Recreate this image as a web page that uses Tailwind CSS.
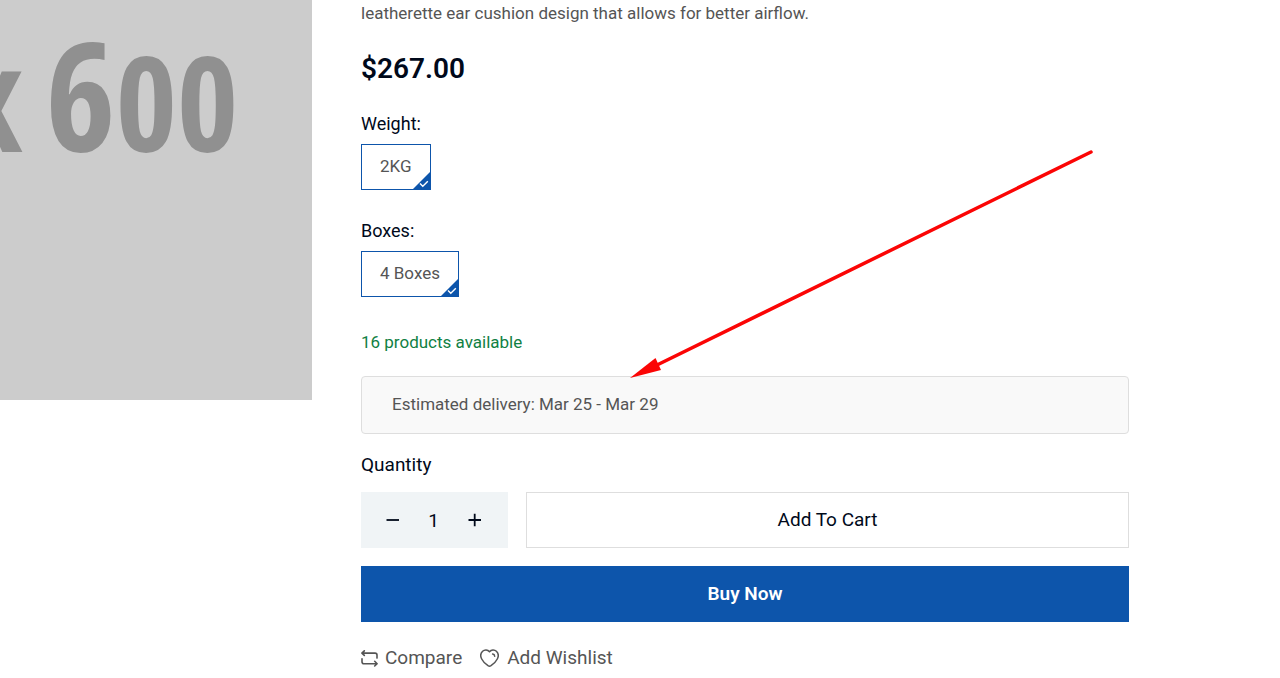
<!DOCTYPE html>
<html lang="en">
<head>
<meta charset="utf-8">
<meta name="viewport" content="width=device-width, initial-scale=1">
<title>Product details</title>
<script src="https://cdn.jsdelivr.net/npm/@tailwindcss/browser@4"></script>
</head>
<body class="relative overflow-x-hidden bg-white font-[Roboto,sans-serif] text-[#555555]">
<main class="flex items-start">
  <div class="flex h-[400px] w-[312px] shrink-0 justify-end overflow-hidden bg-[#cccccc] pt-3 pr-[74px]" role="img" aria-label="Product placeholder">
    <div class="flex items-baseline font-['Open_Sans_Condensed','Open_Sans',sans-serif] leading-[164px] font-bold whitespace-nowrap text-[#909090]"><span class="mr-[22px] text-[148px]">x</span><span class="text-[152px]">6</span><span class="text-[132px]">00</span></div>
  </div>

  <section class="min-w-0 flex-1 pr-[151px] pl-[49px]">
    <p class="text-[17px] leading-[26px]">leatherette ear cushion design that allows for better airflow.</p>
    <p class="mt-[25px] text-[28px] leading-9 font-semibold text-[#00091a]">$267.00</p>

    <fieldset class="mt-[23px]">
      <legend class="text-[18px] leading-7 text-[#00091a]">Weight:</legend>
      <button type="button" aria-pressed="true" class="relative mt-[6px] flex h-[46px] items-center border border-[#0d55ab] px-[18px] text-[17px]">2KG
        <svg class="absolute -right-px -bottom-px size-[19px]" viewBox="0 0 19 19" aria-hidden="true"><path d="M19 0V19H0Z" fill="#0d55ab"/><path d="M8 12.5l2.8 2.8 5-5" fill="none" stroke="#fff" stroke-width="1.4"/></svg>
      </button>
    </fieldset>

    <fieldset class="mt-[27px]">
      <legend class="text-[18px] leading-7 text-[#00091a]">Boxes:</legend>
      <button type="button" aria-pressed="true" class="relative mt-[6px] flex h-[46px] items-center border border-[#0d55ab] px-[18px] text-[17px]">4 Boxes
        <svg class="absolute -right-px -bottom-px size-[19px]" viewBox="0 0 19 19" aria-hidden="true"><path d="M19 0V19H0Z" fill="#0d55ab"/><path d="M8 12.5l2.8 2.8 5-5" fill="none" stroke="#fff" stroke-width="1.4"/></svg>
      </button>
    </fieldset>

    <p class="mt-8 text-[17px] leading-[26px] text-[#108043]">16 products available</p>
    <p class="mt-[21px] flex h-[58px] items-center rounded border border-[#dedede] bg-[#f9f9f9] px-[30px] text-[17px]">Estimated delivery: Mar 25 - Mar 29</p>

    <label for="quantity" class="mt-4 block w-fit text-[19px] leading-[30px] text-[#00091a]">Quantity</label>
    <div class="mt-3 flex gap-[18px]">
      <div class="flex h-14 w-[147px] shrink-0 items-center bg-[#f0f4f6] pr-5 pl-[18px] text-[#00091a]">
        <button type="button" aria-label="Decrease quantity" class="flex h-14 w-[27px] items-center justify-center"><svg class="size-[14px]" viewBox="0 0 14 14" aria-hidden="true"><path d="M.5 7H13" stroke="currentColor" stroke-width="1.8"/></svg></button>
        <input id="quantity" type="text" inputmode="numeric" value="1" class="h-14 w-[55px] bg-transparent text-center text-[19px] outline-none">
        <button type="button" aria-label="Increase quantity" class="flex h-14 w-[27px] items-center justify-center"><svg class="size-[14px]" viewBox="0 0 14 14" aria-hidden="true"><path d="M.5 7H13M6.7 .8V13.2" stroke="currentColor" stroke-width="1.8"/></svg></button>
      </div>
      <button type="button" class="h-14 flex-1 border border-[#dedede] bg-white text-[19px] text-[#00091a]">Add To Cart</button>
    </div>
    <button type="button" class="mt-[18px] h-14 w-full bg-[#0d55ab] text-[19px] font-semibold text-white">Buy Now</button>

    <div class="mt-5 flex items-center gap-[18px] text-[19px] leading-8">
      <a href="#compare" class="flex items-center gap-[7px]">
        <svg class="size-[17px]" viewBox="0 0 17 17" fill="none" stroke="currentColor" stroke-width="1.6" stroke-linecap="round" stroke-linejoin="round" aria-hidden="true"><path d="M3.3 .8L.9 3.1l2.4 2.3M1.2 3.1H14q2 0 2 2v3M13.7 11.3l2.4 2.4-2.4 2.3M15.8 13.7H3q-2 0-2-2V8.7"/></svg>
        <span>Compare</span>
      </a>
      <a href="#wishlist" class="flex items-center gap-2">
        <svg class="h-[18px] w-[19px]" viewBox="0 0 19 18" fill="none" stroke="currentColor" stroke-width="1.5" stroke-linecap="round" stroke-linejoin="round" aria-hidden="true"><path d="M9.5 2.8C7.7.6 4.6.4 2.6 2.3.4 4.4.5 7.7 1.7 10c1.4 2.8 3.9 5.1 6.3 6.7q1.5.9 3 0c2.4-1.6 4.9-3.9 6.3-6.7 1.2-2.3 1.3-5.6-.9-7.7-2-1.9-5.1-1.7-6.9.5Z"/><path d="M12.6 5c1.2.1 2 .9 2.1 2.2"/></svg>
        <span>Add Wishlist</span>
      </a>
    </div>
  </section>
</main>
<svg class="pointer-events-none absolute top-[148px] left-[628px] h-[232px] w-[468px]" viewBox="628 148 468 232" aria-hidden="true"><path d="M656 365.5L1091 152" stroke="#fb0505" stroke-width="3.5" stroke-linecap="round"/><path d="M630 378L655.5 358 661 370Z" fill="#fb0505"/></svg>
</body>
</html>
